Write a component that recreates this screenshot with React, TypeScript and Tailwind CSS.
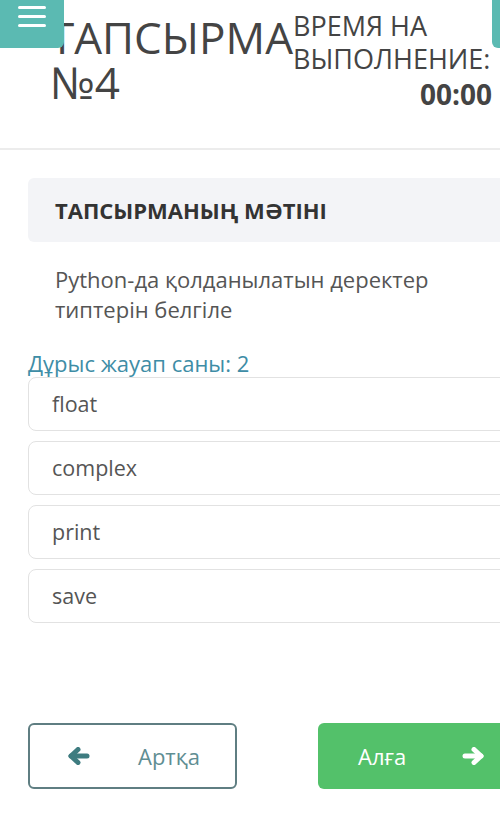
import React from "react";

const options = ["float", "complex", "print", "save"];

function Arrow({ dir, color }: { dir: "left" | "right"; color: string }) {
  return (
    <svg
      width="23"
      height="18"
      viewBox="0 0 23 18"
      style={{ transform: dir === "right" ? "scaleX(-1)" : undefined }}
    >
      <g fill="none" stroke={color} strokeWidth="5" strokeLinecap="round" strokeLinejoin="round">
        <path d="M4 9 H20" />
        <path d="M11 2.5 L4 9 L11 15.5" />
      </g>
    </svg>
  );
}

export default function App() {
  return (
    <div
      className="relative w-[500px] h-[814px] overflow-hidden bg-white"
      style={{ fontFamily: '"Open Sans", "Noto Sans", sans-serif' }}
    >
      {/* header */}
      <div className="flex h-[150px] border-b-2 border-[#ececec]">
        <div className="pl-[50px] pt-[15px] text-[44px] leading-[45px] text-[#444] whitespace-nowrap">
          <div>ТАПСЫРМА</div>
          <div>№4</div>
        </div>
        <div className="ml-auto w-[210px] pr-[8px] pt-[9px] text-[#444]">
          <div className="text-[27px] leading-[33px] whitespace-nowrap">ВРЕМЯ НА</div>
          <div className="text-[27px] leading-[33px] whitespace-nowrap">ВЫПОЛНЕНИЕ:</div>
          <div className="text-right text-[28px] leading-[33px] font-bold mt-[3px]">00:00</div>
        </div>
      </div>

      {/* hamburger */}
      <div className="absolute top-0 left-0 w-[64px] h-[48px] bg-[#5bbab2] rounded-br-md flex flex-col gap-[6px] pt-[6px] pl-[18px]">
        <span className="block w-[28px] h-[3px] bg-white rounded-full" />
        <span className="block w-[28px] h-[3px] bg-white rounded-full" />
        <span className="block w-[28px] h-[3px] bg-white rounded-full" />
      </div>
      <div className="absolute top-0 left-[492px] w-[30px] h-[48px] bg-[#5bbab2] rounded-bl-md" />

      {/* content */}
      <div className="pl-[28px] w-[540px]">
        <div className="mt-[28px] h-[64px] bg-[#f3f4f7] rounded-md flex items-center pl-[27px]">
          <span className="text-[22px] font-bold text-[#333]">ТАПСЫРМАНЫҢ МӘТІНІ</span>
        </div>
        <div className="mt-[22px] pl-[27px] text-[22px] leading-[30px] text-[#555] w-[440px]">
          Python-да қолданылатын деректер типтерін белгіле
        </div>
        <div className="mt-[24px] text-[22px] leading-[30px] text-[#3e8da6] -mb-[1px]">
          Дұрыс жауап саны: 2
        </div>
        <div className="flex flex-col gap-[10px]">
          {options.map((o) => (
            <div
              key={o}
              className="h-[54px] border border-[#e2e2e2] rounded-lg flex items-center pl-[23px] text-[21.5px] text-[#555]"
            >
              {o}
            </div>
          ))}
        </div>

        <div className="mt-[100px] flex gap-[81px]">
          <div className="w-[209px] h-[66px] border-2 border-[#5f7e82] rounded-md flex items-center pl-[37px]">
            <Arrow dir="left" color="#3e7c80" />
            <span className="ml-[48px] text-[22px] text-[#5f8e93]">Артқа</span>
          </div>
          <div className="w-[210px] h-[66px] bg-[#53c16a] rounded-md flex items-center pl-[40px]">
            <span className="text-[22px] text-white">Алға</span>
            <span className="ml-[56px]">
              <Arrow dir="right" color="#ffffff" />
            </span>
          </div>
        </div>
      </div>
    </div>
  );
}
